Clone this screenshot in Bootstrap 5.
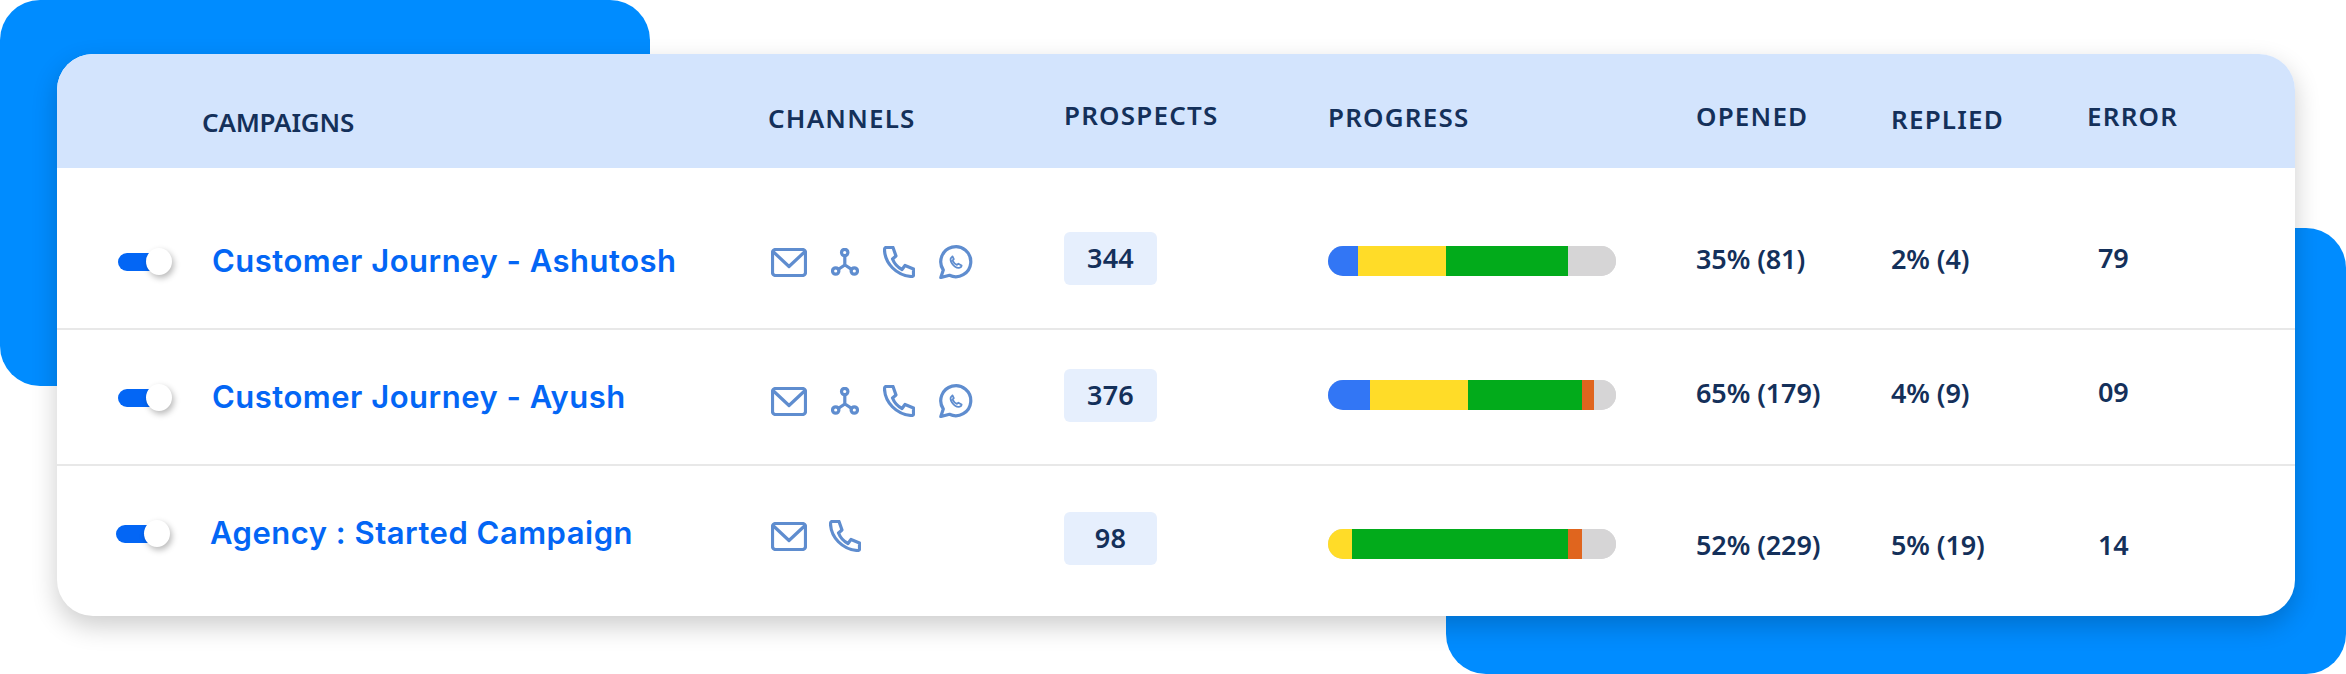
<!DOCTYPE html>
<html lang="en">
<head>
<meta charset="utf-8">
<title>Campaigns</title>
<link rel="stylesheet" href="https://cdn.jsdelivr.net/npm/bootstrap@5.3.0/dist/css/bootstrap.min.css">
<style>
html,body{margin:0;background:#fff;overflow:hidden}
.stage{height:674px;width:2346px;padding:54px 0 0 57px}
.blob{position:absolute;background:#008cff;z-index:0}
.blob-a{left:0;top:0;width:650px;height:386px;border-radius:40px}
.blob-b{left:1446px;top:228px;width:900px;height:446px;border-radius:40px}
.panel{position:relative;z-index:1;width:2238px;height:562px;border:0;border-radius:36px;overflow:hidden;background:#fff;box-shadow:0 10px 26px rgba(0,0,0,.2);font-family:"Noto Sans",sans-serif;color:#14305a}
.grid-line{display:grid;grid-template-columns:711px 296px 264px 368px 195px 196px 1fr;align-items:start}
.head-line{height:114px;background:#d3e4fd;font-size:26px;font-weight:600;line-height:30px;letter-spacing:1.2px}
.line-a{height:162px;border-bottom:2px solid #e8e8e8}
.line-b{height:136px;border-bottom:2px solid #e8e8e8}
.line-c{height:150px}
.val{font-size:27px;font-weight:600;line-height:30px;letter-spacing:-.1px}
.lead-cell{padding-left:61px}
.lead-cell.tight{padding-left:59px}
.lead-head{padding-left:145px;letter-spacing:-.2px}
.toggle-track{position:relative;display:block;flex:none;width:34px;height:18px;margin-top:10px;background:#0366f5;border-radius:9px 0 0 9px}
.toggle-knob{position:absolute;left:28px;top:-5px;width:26px;height:27px;border-radius:50%;background:#fff;box-shadow:2px 3px 6px rgba(0,0,0,.28)}
.camp-name{font-family:"Inter",sans-serif;font-size:31px;font-weight:600;line-height:36px;letter-spacing:.5px;color:#0366f5;text-decoration:none;margin-left:60px;white-space:nowrap}
.icons{height:34px;padding-left:3px;gap:24px}
.icons.pair{gap:22px}
.icons svg{display:block;fill:none;stroke:#5f8dcf;stroke-width:3.200;stroke-linecap:round;stroke-linejoin:round;flex:none}
.count{width:93px;height:53px;background:#e6effd;border-radius:6px;font-size:27px;font-weight:600;letter-spacing:.2px}
.track{width:288px;height:30px;border-radius:15px;background:#d6d5d6}
.track .progress-bar{transition:none}
.s-blue{background:#3276f5}.s-yel{background:#ffdc28}.s-grn{background:#02ab1b}.s-org{background:#e0651e}.s-gry{background:#d6d5d6}
.err{padding-left:11px}
.dy-39{margin-top:39px}.dy-46{margin-top:46px}.dy-47{margin-top:47px}.dy-48{margin-top:48px}.dy-49{margin-top:49px}.dy-50{margin-top:50px}.dy-53{margin-top:53px}.dy-54{margin-top:54px}.dy-63{margin-top:63px}.dy-64{margin-top:64px}.dy-75{margin-top:75px}.dy-76{margin-top:76px}.dy-77{margin-top:77px}.dy-78{margin-top:78px}
</style>
</head>
<body>
<svg width="0" height="0" class="d-block position-absolute">
  <defs>
    <symbol id="i-mail" viewBox="0 0 36 29"><rect x="1.5" y="1.5" width="33" height="26" rx="3"/><path d="M2.5 4 18 18.500 33.500 4"/></symbol>
    <symbol id="i-node" viewBox="0 0 28 28"><circle cx="13.700" cy="4.500" r="3.200"/><circle cx="4.700" cy="23" r="3.200"/><circle cx="23.300" cy="23" r="3.200"/><path d="M13.800 7.700V17L7.500 21.300M14 17l6.600 4.300"/></symbol>
    <symbol id="i-phone" viewBox="0 0 32 32"><path d="M3 1.500h7L13 10l-3.500 3c2 5 4.500 8 9.500 10.500l3-4 8.500 3.500v6c0 1-1 1.500-2 1.500C13 29.500 2 17 1.500 4c0-1.500.5-2.500 1.500-2.500z"/></symbol>
    <symbol id="i-wa" viewBox="0 0 34 34"><path d="M1.800 32.500 4.300 25A15 15 0 1 1 10.500 30.300z"/><path d="M12.500 12.500c-1.500 1-1.200 3.500.5 6 1.800 2.600 4.500 4.500 7 4.300 1.500-.2 2.500-1 2.600-2.300l-3.200-1.800-1.500 1.200c-1.800-.8-3.400-2.500-4.300-4.300l1.200-1.400-1.300-2.800z" stroke-width="1.800"/></symbol>
  </defs>
</svg>

<div class="blob blob-a"></div>
<div class="blob blob-b"></div>

<main class="stage">
  <section class="card panel">
    <div class="grid-line head-line">
      <div class="lead-head dy-53">CAMPAIGNS</div>
      <div class="dy-49">CHANNELS</div>
      <div class="dy-46">PROSPECTS</div>
      <div class="dy-48">PROGRESS</div>
      <div class="dy-47">OPENED</div>
      <div class="dy-50">REPLIED</div>
      <div class="dy-47">ERROR</div>
    </div>

    <div class="grid-line line-a">
      <div class="lead-cell d-flex align-items-start dy-75">
        <span class="toggle-track"><span class="toggle-knob"></span></span>
        <a href="#" class="camp-name">Customer Journey - Ashutosh</a>
      </div>
      <div class="icons d-flex align-items-center dy-77">
        <svg width="36" height="29"><use href="#i-mail"/></svg>
        <svg width="28" height="28"><use href="#i-node"/></svg>
        <svg width="32" height="32"><use href="#i-phone"/></svg>
        <svg width="34" height="34"><use href="#i-wa"/></svg>
      </div>
      <div><div class="count d-flex align-items-center justify-content-center dy-64">344</div></div>
      <div class="progress track dy-78">
        <div class="progress-bar s-blue" style="width:10.42%"></div>
        <div class="progress-bar s-yel" style="width:30.56%"></div>
        <div class="progress-bar s-grn" style="width:42.36%"></div>
        <div class="progress-bar s-gry" style="width:16.66%"></div>
      </div>
      <div class="val dy-76">35% (81)</div>
      <div class="val dy-76">2% (4)</div>
      <div class="val err dy-75">79</div>
    </div>

    <div class="grid-line line-b">
      <div class="lead-cell d-flex align-items-start dy-49">
        <span class="toggle-track"><span class="toggle-knob"></span></span>
        <a href="#" class="camp-name">Customer Journey - Ayush</a>
      </div>
      <div class="icons d-flex align-items-center dy-54">
        <svg width="36" height="29"><use href="#i-mail"/></svg>
        <svg width="28" height="28"><use href="#i-node"/></svg>
        <svg width="32" height="32"><use href="#i-phone"/></svg>
        <svg width="34" height="34"><use href="#i-wa"/></svg>
      </div>
      <div><div class="count d-flex align-items-center justify-content-center dy-39">376</div></div>
      <div class="progress track dy-50">
        <div class="progress-bar s-blue" style="width:14.58%"></div>
        <div class="progress-bar s-yel" style="width:34.03%"></div>
        <div class="progress-bar s-grn" style="width:39.58%"></div>
        <div class="progress-bar s-org" style="width:4.17%"></div>
        <div class="progress-bar s-gry" style="width:7.64%"></div>
      </div>
      <div class="val dy-48">65% (179)</div>
      <div class="val dy-48">4% (9)</div>
      <div class="val err dy-47">09</div>
    </div>

    <div class="grid-line line-c">
      <div class="lead-cell tight d-flex align-items-start dy-49">
        <span class="toggle-track"><span class="toggle-knob"></span></span>
        <a href="#" class="camp-name">Agency : Started Campaign</a>
      </div>
      <div class="icons pair d-flex align-items-center dy-53">
        <svg width="36" height="29"><use href="#i-mail"/></svg>
        <svg width="32" height="32"><use href="#i-phone"/></svg>
      </div>
      <div><div class="count d-flex align-items-center justify-content-center dy-46">98</div></div>
      <div class="progress track dy-63">
        <div class="progress-bar s-yel" style="width:8.33%"></div>
        <div class="progress-bar s-grn" style="width:75%"></div>
        <div class="progress-bar s-org" style="width:4.86%"></div>
        <div class="progress-bar s-gry" style="width:11.81%"></div>
      </div>
      <div class="val dy-64">52% (229)</div>
      <div class="val dy-64">5% (19)</div>
      <div class="val err dy-64">14</div>
    </div>
  </section>
</main>
</body>
</html>
